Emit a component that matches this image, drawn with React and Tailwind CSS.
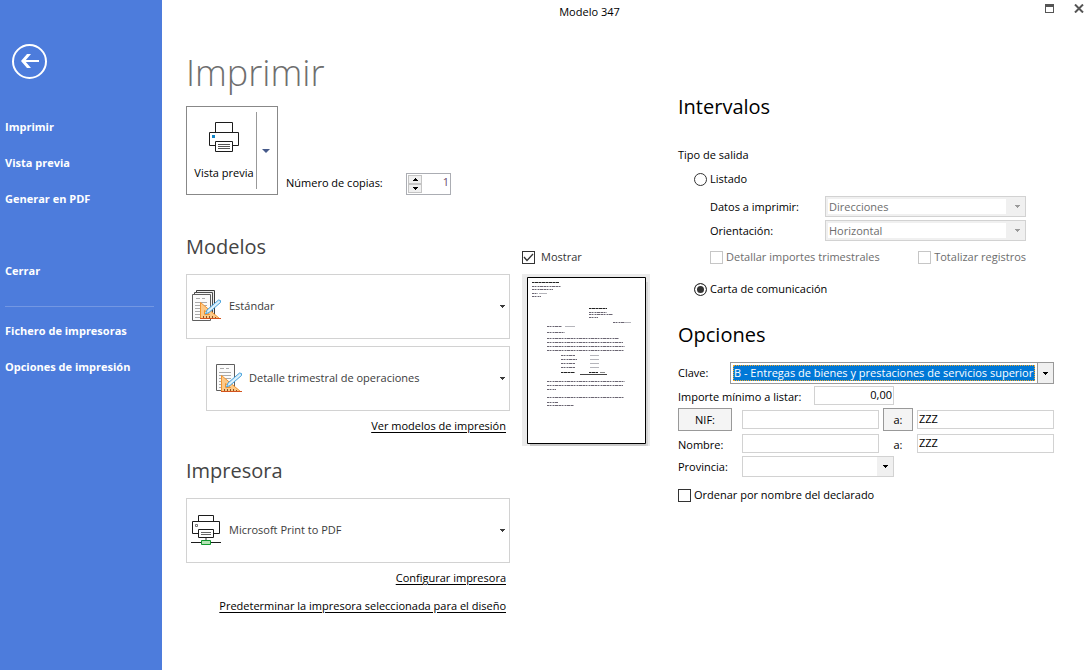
import { useState } from 'react';

const menuItems = ['Imprimir', 'Vista previa', 'Generar en PDF'];
const extraItems = ['Fichero de impresoras', 'Opciones de impresión'];

const Caret = ({ className }) => (
    <svg width="5" height="3" viewBox="0 0 5 3" className={className} fill="currentColor" shapeRendering="crispEdges" aria-hidden="true">
        <path d="M0 0h5v1H4v1H3v1H2V2H1V1H0z" />
    </svg>
);

const PrinterIcon = () => (
    <svg width="32" height="32" viewBox="0 0 32 32" fill="none" stroke="#1c1c1c" aria-hidden="true">
        <path d="M7.5 11.5v-10h17v10" />
        <path d="M7.5 24.5h-6v-13h29v13h-6" />
        <path d="M7.5 20.5h17v10h-17z" fill="#fff" />
        <path d="M10 23.5h12M10 25.5h12M10 27.5h12" stroke="#555" />
        <path d="M4 14h3v3H4z" fill="#1285c7" stroke="none" />
    </svg>
);

const NetworkPrinterIcon = () => (
    <svg width="32" height="32" viewBox="0 0 32 32" fill="none" stroke="#1c1c1c" aria-hidden="true">
        <path d="M7.5 7.5v-6h15v6" />
        <path d="M7.5 19.5h-6v-12h27v12h-6" />
        <path d="M4.5 10.5h2v2h-2z" stroke="#777" />
        <path d="M7.5 15.5h15v8h-15z" fill="#fff" />
        <path d="M10 18.500h10M10 20.500h10" stroke="#666" />
        <path d="M15 24v2" stroke="#999" strokeWidth="2" />
        <path d="M0 28.500h30" />
        <path d="M10.5 26.500h9v4h-9z" fill="#b5e3b5" stroke="#12992f" />
    </svg>
);

const Ruler = () => (
    <>
        <path d="M9.500 12.500v16h19z" fill="#fcc988" stroke="#f0932f" />
        <path d="M13.500 20.500v4h5z" fill="#fff" stroke="#f0932f" />
        <path d="M12.500 28v-2M15.500 28v-2M18.500 28v-2M21.500 28v-2M24.500 28v-1" stroke="#8a5326" />
        <path d="M9 28.500h21" stroke="#d4531c" />
        <path d="M14.500 24l1.500-4L27.500 10l2 .5v2L18 22.500z" fill="#cfeafb" stroke="#4aa3db" />
        <path d="M17 21.500L28 12" stroke="#e9f6fd" />
    </>
);

const StackedDesignIcon = () => (
    <svg width="32" height="32" viewBox="0 0 32 32" fill="none" aria-hidden="true">
        <path d="M5.500 .5h18v24h-18z" fill="#ececec" stroke="#3c3c3c" />
        <path d="M3.500 2.500h18v24h-18z" fill="#f4f4f4" stroke="#4c4c4c" />
        <path d="M1.500 4.500h18v26h-18z" fill="#fbfbfb" stroke="#5f5f5f" />
        <path d="M5 8.500h4M11 8.500h3M4 12.500h12M4 15.500h12M4 18.500h12M4 21.500h12M4 24.500h12M4 27.500h12" stroke="#aaa" />
        <Ruler />
    </svg>
);

const DesignIcon = () => (
    <svg width="32" height="32" viewBox="0 0 32 32" fill="none" aria-hidden="true">
        <path d="M5.500 2.500h18v26h-18z" fill="#fbfbfb" stroke="#5f5f5f" />
        <path d="M9 6.500h4M15 6.500h3M8 10.500h12M8 13.500h12M8 16.500h12M8 19.500h12M8 22.500h12M8 25.500h12" stroke="#aaa" />
        <g transform="translate(1 1)">
            <Ruler />
        </g>
    </svg>
);

const PagePreview = () => (
    <svg width="128" height="172" viewBox="0 0 128 172" fill="none" role="img" aria-label="Vista previa de la carta">
        <path d="M0 0h128v172H0z" fill="#ebebeb" />
        <path d="M8 8h116v164H8z" fill="#c9c9c9" />
        <path d="M124 8h2v164h-2z" fill="#d6d6d6" />
        <path d="M5.500 3.500h118v166H5.500z" fill="#fff" stroke="#000" />
        <g stroke="#b5b5bb">
            <path d="M10 12.500h29M10 15.500h21M10 19.500h6M17 19.500h8M10 22.500h9" />
            <path d="M67 38.500h18M67 40.500h24M67 43.500h9M91 48.500h18" />
            <path d="M25 52.500h15M43 52.500h10M25 58.500h18" />
            <path d="M25 64.500h72M25 68.500h76M25 72.500h78M25 76.500h77" />
            <path d="M39 81.500h14M68 81.500h9M39 85.500h16M68 85.500h9M39 89.500h14M68 89.500h9M39 93.500h14M68 93.500h9" />
            <path d="M25 107.500h78M25 111.500h76M25 115.500h9M25 123.500h77M25 128.500h11M25 131.500h27" />
        </g>
        <g stroke="#6b6572" strokeDasharray="2 1 1 2 1 1 3 1">
            <path d="M10 12.500h29M10 15.500h21M10 19.500h6M10 22.500h9" />
            <path d="M67 38.500h18M67 40.500h24M67 43.500h9M91 48.500h12" />
            <path d="M25 52.500h15M25 58.500h18" />
            <path d="M25 64.500h72M25 68.500h76M25 72.500h78M25 76.500h77" />
            <path d="M39 81.500h14M39 85.500h16M39 89.500h14M39 93.500h14" />
            <path d="M25 107.500h78M25 111.500h76M25 115.500h9M25 123.500h77M25 128.500h11M25 131.500h27" />
        </g>
        <path d="M10 8.500h27M67 34.500h18M39 98.500h14M67 98.500h9M78 98.500h5" stroke="#888" />
        <path d="M10 8.500h27M67 34.500h18M39 98.500h14M67 98.500h9" stroke="#222" strokeDasharray="2 1 3 1" />
        <path d="M58 100.500h27" stroke="#444" />
    </svg>
);

// Tall drop-down with a big icon on the left
const IconSelect = ({ icon, label, value }) => (
    <div className="grid h-[65px] items-center border border-[#d2d2d2] text-[#3b3b3b]">
        <span className="pointer-events-none col-start-1 row-start-1 pb-[2px] pl-1">{icon}</span>
        <select aria-label={label} className="col-start-1 row-start-1 h-full w-full appearance-none bg-transparent pr-4 pb-[2px] pl-[42px] outline-none">
            <option>{value}</option>
        </select>
        <Caret className="pointer-events-none col-start-1 row-start-1 mr-1 justify-self-end" />
    </div>
);

const DisabledSelect = ({ id, value }) => (
    <div className="grid h-[21px] w-[201px] items-center border border-[#d2d2d2] bg-[#f0f0f0] text-[#6d6d6d]">
        <select id={id} disabled className="col-start-1 row-start-1 mr-[19px] ml-[2px] h-[15px] appearance-none bg-white pl-px leading-[15px] opacity-100">
            <option>{value}</option>
        </select>
        <Caret className="col-start-1 row-start-1 mr-[5px] justify-self-end text-[#9a9a9a]" />
    </div>
);

const Check = ({ id, label, disabled, className, ...props }) => (
    <label htmlFor={id} className={className}>
        <span className="grid">
            <input
                id={id}
                type="checkbox"
                disabled={disabled}
                className="peer col-start-1 row-start-1 size-[13px] appearance-none border border-[#333] bg-white disabled:border-[#c6c6c6]"
                {...props}
            />
            <svg viewBox="0 0 13 13" className="pointer-events-none invisible col-start-1 row-start-1 size-[13px] peer-checked:visible" fill="none" stroke="#333">
                <path d="M2 6l3 3.500L11 3" strokeWidth="1.300" />
            </svg>
        </span>
        {label}
    </label>
);

const Radio = ({ label, ...props }) => (
    <label className="flex items-center gap-[3px] pl-4 leading-4">
        <input
            type="radio"
            name="salida"
            className="size-[13px] appearance-none rounded-full border border-[#333] bg-white checked:bg-[#333] checked:shadow-[inset_0_0_0_2px_white]"
            {...props}
        />
        {label}
    </label>
);

const field = 'h-[19px] border border-[#d2d2d2] bg-white px-px pb-[2px] outline-none min-w-0';

const App = () => {
    const [salida, setSalida] = useState('carta');
    const [mostrar, setMostrar] = useState(true);
    const [copias, setCopias] = useState(1);

    return (
        <div className="flex min-h-screen bg-white font-['Open_Sans',sans-serif] text-[11px] leading-4 text-black">
            <aside className="flex w-[162px] shrink-0 flex-col bg-[#4d7cdc] pt-11 font-bold text-white">
                <button aria-label="Volver" className="ml-3 size-[35px]">
                    <svg width="35" height="35" viewBox="0 0 35 35" fill="none" stroke="#fff">
                        <circle cx="17.500" cy="17.500" r="16.500" strokeWidth="2" />
                        <path d="M11 17h16" strokeWidth="2" />
                        <path d="M15 10h4l-6 7 6 7h-4l-6-7z" fill="#fff" stroke="none" />
                    </svg>
                </button>
                <nav className="flex flex-col gap-5 pt-10 pl-[5px]">
                    {menuItems.map((item) => (
                        <a key={item} href="#">{item}</a>
                    ))}
                    <a href="#" className="mt-9">Cerrar</a>
                    <hr className="mr-2 mt-[7px] -mb-[4px] border-[#7397e3]" />
                    {extraItems.map((item) => (
                        <a key={item} href="#">{item}</a>
                    ))}
                </nav>
            </aside>

            <div className="min-w-0 flex-1">
                <header className="flex h-6 items-center">
                    <h1 className="flex-1 text-center">Modelo 347</h1>
                    <div className="flex w-[74px] items-center justify-end gap-[19px] pr-[7px] pb-2 text-[#555]">
                        <button aria-label="Maximizar">
                            <svg width="10" height="9" viewBox="0 0 10 9" fill="none" stroke="currentColor" shapeRendering="crispEdges">
                                <path d="M.5 .5h8v8h-8zM0 1.500h9M0 2.500h9" />
                            </svg>
                        </button>
                        <button aria-label="Cerrar ventana">
                            <svg width="10" height="9" viewBox="0 0 10 9" fill="none" stroke="currentColor" strokeWidth="2">
                                <path d="M1 .5l8 8M9 .5l-8 8" />
                            </svg>
                        </button>
                    </div>
                </header>

                <main className="flex gap-7 pr-[37px] pb-6 pl-6">
                    <div className="min-w-0 flex-1">
                        <h2 className="pt-6 text-[36px] leading-[50px] font-light text-[#6e6e6e]">Imprimir</h2>
                        <div className="mt-2 flex h-[89px] items-end">
                            <div className="flex h-[89px] w-[92px] border border-[#888]">
                                <button className="my-[5px] flex w-[70px] flex-col items-center justify-end gap-3 border-r border-[#999] pb-2 pl-[5px] whitespace-nowrap">
                                    <PrinterIcon />
                                    <span>Vista previa</span>
                                </button>
                                <button aria-label="Más opciones" className="flex flex-1 items-center justify-center pr-[2px] text-[#465a8a]">
                                    <svg width="8" height="4" viewBox="0 0 8 4" fill="currentColor"><path d="M0 0h8L4 4z" /></svg>
                                </button>
                            </div>
                            <label htmlFor="copias" className="ml-2 w-[120px] pb-1">Número de copias:</label>
                            <div className="flex h-[22px] w-[45px] border border-[#abadb3] p-px">
                                <div className="flex w-[14px] flex-col">
                                    <button aria-label="Más" onClick={() => setCopias(copias + 1)} className="flex flex-1 items-center justify-center border border-[#c4c4c4] bg-[#f0f0f0]">
                                        <Caret className="rotate-180" />
                                    </button>
                                    <button aria-label="Menos" onClick={() => setCopias(Math.max(1, copias - 1))} className="flex flex-1 items-center justify-center border border-[#c4c4c4] bg-[#f0f0f0]">
                                        <Caret />
                                    </button>
                                </div>
                                <input id="copias" value={copias} onChange={(e) => setCopias(Number(e.target.value) || 1)} className="w-0 flex-1 pb-1 text-right text-[#6b4a6b] outline-none" />
                            </div>
                        </div>

                        <div className="mt-[37px] flex items-start gap-3">
                            <div className="min-w-0 flex-1 text-right">
                                <h3 className="mb-3 text-left text-xl leading-[30px] text-[#444]">Modelos</h3>
                                <IconSelect label="Modelo" icon={<StackedDesignIcon />} value="Estándar" />
                                <div className="mt-[7px] mb-[7px] ml-5">
                                    <IconSelect label="Detalle" icon={<DesignIcon />} value="Detalle trimestral de operaciones" />
                                </div>
                                <a href="#" className="mr-1 inline-block underline underline-offset-2">Ver modelos de impresión</a>
                                <h3 className="mt-[22px] mb-3 text-left text-xl leading-[30px] text-[#444]">Impresora</h3>
                                <IconSelect label="Impresora" icon={<NetworkPrinterIcon />} value="Microsoft Print to PDF" />
                                <div className="mt-[7px] mr-1 flex flex-col items-end gap-3">
                                    <a href="#" className="underline underline-offset-2">Configurar impresora</a>
                                    <a href="#" className="underline underline-offset-2">Predeterminar la impresora seleccionada para el diseño</a>
                                </div>
                            </div>
                            <div className="w-[128px] shrink-0 pt-[17px]">
                                <Check id="mostrar" label="Mostrar" className="flex items-center gap-[6px] pb-[9px] text-[#333]" checked={mostrar} onChange={(e) => setMostrar(e.target.checked)} />
                                {mostrar && <PagePreview />}
                            </div>
                        </div>
                    </div>

                    <div className="w-[376px] shrink-0 pt-[68px]">
                        <h3 className="text-xl leading-[30px]">Intervalos</h3>
                        <div role="radiogroup" aria-labelledby="tipo" className="pt-[25px]">
                            <p id="tipo">Tipo de salida</p>
                            <div className="pt-2">
                                <Radio label="Listado" checked={salida === 'listado'} onChange={() => setSalida('listado')} />
                            </div>
                            <div className="grid grid-cols-[115px_201px] items-center gap-y-[3px] pt-[9px] pl-8">
                                <label htmlFor="datos">Datos a imprimir:</label>
                                <DisabledSelect id="datos" value="Direcciones" />
                                <label htmlFor="orientacion">Orientación:</label>
                                <DisabledSelect id="orientacion" value="Horizontal" />
                            </div>
                            <div className="flex w-[348px] justify-between pt-2 pb-4 pl-8 text-[#6d6d6d]">
                                <Check id="detallar" disabled label="Detallar importes trimestrales" className="flex items-center gap-[3px]" />
                                <Check id="totalizar" disabled label="Totalizar registros" className="flex items-center gap-[3px]" />
                            </div>
                            <Radio label="Carta de comunicación" checked={salida === 'carta'} onChange={() => setSalida('carta')} />
                        </div>

                        <h3 className="pt-[23px] text-xl leading-[30px]">Opciones</h3>
                        <div className="mt-3 flex items-center">
                            <label htmlFor="clave" className="w-[52px] shrink-0">Clave:</label>
                            <div className="flex h-[22px] min-w-0 flex-1 border border-[#999]">
                                <select id="clave" className="m-[2px] min-w-0 flex-1 appearance-none overflow-hidden border border-dotted border-[#f5a623] bg-[#0078d7] leading-[14px] text-clip text-white outline-none">
                                    <option>B - Entregas de bienes y prestaciones de servicios superior</option>
                                </select>
                                <span className="flex w-4 shrink-0 items-center justify-center border-l border-[#999] bg-[#f0f0f0]"><Caret /></span>
                            </div>
                        </div>
                        <div className="mt-[2px] flex items-center">
                            <label htmlFor="importe" className="w-[136px] pt-[3px]">Importe mínimo a listar:</label>
                            <input id="importe" defaultValue="0,00" className={`${field} w-20 text-right`} />
                        </div>
                        <div className="mt-[3px] flex items-center">
                            <button className="mr-[10px] h-[23px] w-[54px] border border-[#999] bg-[#f4f4f4]">NIF:</button>
                            <input aria-label="NIF desde" className={`${field} flex-1`} />
                            <button className="mx-1 h-[23px] w-[30px] border border-[#999] bg-[#f4f4f4]">a:</button>
                            <input aria-label="NIF hasta" defaultValue="ZZZ" className={`${field} flex-1`} />
                        </div>
                        <div className="mt-[3px] flex items-center">
                            <label htmlFor="nombre" className="w-16 pt-[3px]">Nombre:</label>
                            <input id="nombre" className={`${field} flex-1`} />
                            <label htmlFor="nombreHasta" className="w-[38px] pt-[3px] text-center">a:</label>
                            <input id="nombreHasta" defaultValue="ZZZ" className={`${field} flex-1`} />
                        </div>
                        <div className="mt-[3px] flex items-center">
                            <label htmlFor="provincia" className="w-16">Provincia:</label>
                            <div className="grid h-[21px] w-[152px] items-stretch border border-[#d2d2d2]">
                                <select id="provincia" className="col-start-1 row-start-1 appearance-none outline-none">
                                    <option></option>
                                </select>
                                <span className="pointer-events-none col-start-1 row-start-1 flex w-4 items-center justify-center justify-self-end bg-[#f0f0f0]"><Caret /></span>
                            </div>
                        </div>
                        <Check id="ordenar" label="Ordenar por nombre del declarado" className="flex items-center gap-[3px] pt-[10px]" />
                    </div>
                </main>
            </div>
        </div>
    );
};

export default App;
